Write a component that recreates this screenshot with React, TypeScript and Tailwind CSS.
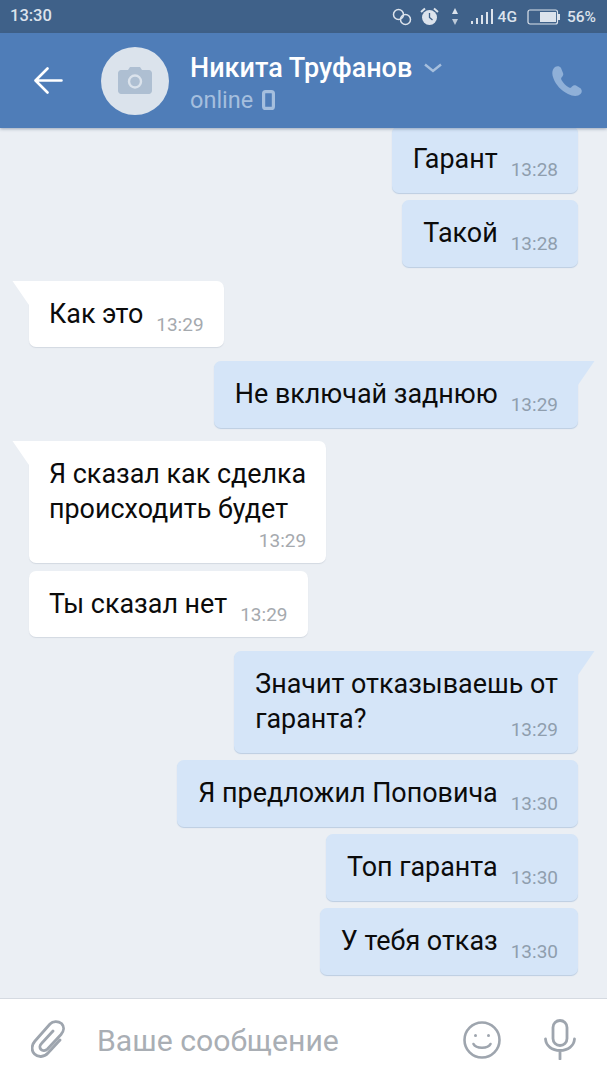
const font = { fontFamily: 'Roboto, "Noto Sans", sans-serif' };

type Msg = { lines: string[]; time: string; out?: boolean; tail?: boolean; timeBelow?: boolean; short?: boolean; gap: string };

const messages: Msg[] = [
  { lines: ['Гарант'], time: '13:28', out: true, gap: 'mt-0' },
  { lines: ['Такой'], time: '13:28', out: true, gap: 'mt-[7px]' },
  { lines: ['Как это'], time: '13:29', tail: true, short: true, gap: 'mt-[14px]' },
  { lines: ['Не включай заднюю'], time: '13:29', out: true, tail: true, gap: 'mt-[14px]' },
  { lines: ['Я сказал как сделка', 'происходить будет'], time: '13:29', tail: true, timeBelow: true, gap: 'mt-[13px]' },
  { lines: ['Ты сказал нет'], time: '13:29', short: true, gap: 'mt-[8px]' },
  { lines: ['Значит отказываешь от', 'гаранта?'], time: '13:29', out: true, tail: true, gap: 'mt-[14px]' },
  { lines: ['Я предложил Поповича'], time: '13:30', out: true, gap: 'mt-[7px]' },
  { lines: ['Топ гаранта'], time: '13:30', out: true, gap: 'mt-[7px]' },
  { lines: ['У тебя отказ'], time: '13:30', out: true, gap: 'mt-[7px]' },
];

function Bubble({ m }: { m: Msg }) {
  const last = m.lines.length - 1;
  const time = <span className={`text-[19px] leading-[20px] -mb-[3px] ${m.out ? 'text-[#8f9eae]' : 'text-[#a5a9ae]'}`}>{m.time}</span>;
  return (
    <div className={`relative pr-[20px] pt-[16px] rounded-[7px] ${m.short || m.timeBelow ? 'pb-[15px]' : 'pb-[16px]'} ${m.gap} ${m.out ? 'pl-[21px] self-end mr-[29px] bg-[#d5e5f8] shadow-[0_1px_1px_#bccde2]' : 'pl-[20px] self-start ml-[29px] bg-white shadow-[0_1px_1px_#d3d9e1]'} ${m.tail ? (m.out ? 'rounded-tr-none' : 'rounded-tl-none') : ''}`}>
      {m.tail && m.out && (
        <svg className="absolute top-0 -right-[17px]" width="18" height="30" viewBox="0 0 18 30">
          <path d="M0 0H17.5L1 24C0.4 25 0 26 0 28Z" fill="#d5e5f8" />
        </svg>
      )}
      {m.tail && !m.out && (
        <svg className="absolute top-0 -left-[17px]" width="18" height="30" viewBox="0 0 18 30">
          <path d="M18 0H0.5L17 24C17.6 25 18 26 18 28Z" fill="#ffffff" />
        </svg>
      )}
      {m.lines.map((line, i) => (
        <div key={i} className="flex items-end justify-between gap-[13px] text-[26.9px] leading-[35px] text-[#0b0b0b]">
          <span className="whitespace-nowrap">{line}</span>
          {i === last && !m.timeBelow && time}
        </div>
      ))}
      {m.timeBelow && <div className="flex justify-end mt-[4px]">{time}</div>}
    </div>
  );
}

function StatusIcons() {
  return (
    <div className="flex items-center text-[#dce3ec]">
      <svg width="20" height="18" viewBox="0 0 20 18" fill="none" stroke="currentColor" strokeWidth="1.5">
        <circle cx="6.5" cy="6.5" r="5" />
        <circle cx="13.5" cy="11.5" r="5" />
      </svg>
      <svg className="ml-[8px]" width="19" height="19" viewBox="0 0 19 19">
        <circle cx="9.5" cy="10.5" r="7.5" fill="currentColor" />
        <path d="M1 5L5 1.5M18 5L14 1.5" stroke="currentColor" strokeWidth="2" />
        <path d="M9.5 6V10.5L12.5 13" stroke="#3f6189" strokeWidth="1.3" fill="none" />
      </svg>
      <svg className="ml-[13px]" width="6" height="17" viewBox="0 0 6 17" fill="currentColor">
        <path d="M3 0L6 6H0Z" />
        <path d="M3 17L0 11H6Z" opacity="0.8" />
      </svg>
      <svg className="ml-[13px]" width="22" height="16" viewBox="0 0 22 16" fill="currentColor">
        <rect x="0" y="12" width="2" height="3" />
        <rect x="5" y="9" width="2" height="6" />
        <rect x="10" y="6" width="2" height="9" />
        <rect x="15" y="3" width="2" height="12" />
        <rect x="20" y="0" width="2" height="15" />
      </svg>
      <span className="ml-[5px] text-[15.5px] font-medium leading-[18px]">4G</span>
      <svg className="ml-[10px]" width="33" height="16" viewBox="0 0 33 16" fill="none">
        <rect x="1" y="1" width="29.5" height="14" rx="2" stroke="currentColor" strokeWidth="1.2" />
        <rect x="13" y="3" width="16" height="10" fill="currentColor" />
        <rect x="31" y="5" width="2" height="6" fill="currentColor" />
      </svg>
      <span className="ml-[7px] text-[15.5px] font-medium leading-[18px]">56%</span>
    </div>
  );
}

export default function App() {
  return (
    <div className="w-[607px] h-[1080px] flex flex-col overflow-hidden bg-[#ebeff4]" style={font}>
      {/* status bar */}
      <div className="h-[33px] shrink-0 flex items-center justify-between pl-[10px] pr-[11px] bg-[#3f6189]">
        <span className="text-[16.5px] font-medium text-[#dce3ec]">13:30</span>
        <StatusIcons />
      </div>

      {/* header */}
      <div className="relative z-10 h-[95px] shrink-0 flex items-center pl-[34px] pr-[25px] bg-[#4f7db8] shadow-[0_1px_3px_rgba(60,80,110,0.45)]">
        <svg width="29" height="27" viewBox="0 0 29 27" fill="none" stroke="#ffffff" strokeWidth="2.6" strokeLinecap="round" strokeLinejoin="round">
          <path d="M27.5 13.5H2M13.5 1.5L1.5 13.5L13.5 25.5" />
        </svg>
        <div className="ml-[38px] w-[68px] h-[68px] rounded-full bg-[#dbe3ec] flex items-center justify-center">
          <svg width="34" height="27" viewBox="0 0 34 27">
            <path d="M3 3H10L12 0H22L24 3H31C32.5 3 34 4.5 34 6V24C34 25.500 32.500 27 31 27H3C1.500 27 0 25.500 0 24V6C0 4.500 1.500 3 3 3Z" fill="#aebfd2" />
            <circle cx="17" cy="14.500" r="6" fill="none" stroke="#dbe3ec" strokeWidth="2.4" />
          </svg>
        </div>
        <div className="ml-[21px] flex-1 flex flex-col mt-[5px]">
          <div className="flex items-center h-[34px]">
            <span className="text-[27px] font-medium text-white leading-[34px]">Никита Труфанов</span>
            <svg className="ml-[12px]" width="18" height="10" viewBox="0 0 18 10" fill="none" stroke="#a6bfdd" strokeWidth="2.400">
              <path d="M1 1.500L9 8L17 1.500" />
            </svg>
          </div>
          <div className="flex items-center h-[30px]">
            <span className="text-[23.5px] leading-[30px] text-[#a5bfde]">online</span>
            <svg className="ml-[9px]" width="13" height="20" viewBox="0 0 13 20" fill="none" stroke="#a5bfde" strokeWidth="3.200">
              <rect x="1.600" y="1.600" width="9.800" height="16.800" rx="2" />
            </svg>
          </div>
        </div>
        <svg width="30" height="30" viewBox="0 0 30 30" fill="#8fb0d8">
          <path d="M3 1C5 -0.500 8 0 9 2L11 7C11.700 8.700 11 10 9.500 11.500C9 12 9 13 9.500 14C11.500 17.500 13.500 19.500 17 21.500C18 22 19 22 19.500 21C21 19.300 22.500 18.700 24 19.500L28 22C30 23.300 30.500 26 28.500 28C26 30.500 21 30.500 16 28C9 24.500 4 19 1.500 12.500C-0.500 8 0 3.500 3 1Z" />
        </svg>
      </div>

      {/* messages */}
      <div className="flex-1 min-h-0 overflow-hidden flex flex-col justify-end pb-[23px] text-[#0b0b0b]">
        {messages.map((m, i) => (
          <Bubble key={i} m={m} />
        ))}
      </div>

      {/* input */}
      <div className="h-[82px] shrink-0 flex items-center bg-white border-t border-[#d5dae1] pl-[31px] pr-[31px]">
        <svg width="34" height="39" viewBox="0 0 34 39" fill="none" stroke="#9ea5ae" strokeWidth="2.800" strokeLinecap="round">
          <path d="M29 20L17 33C13 37.500 7 37.500 3.500 34C0 30.500 0.500 25 4 21L19 4C22 1 27 0.800 30.500 3.500C33.500 6.500 33 11 30 14.500L16.500 29C14.500 31 11.500 31 10 29.500C8.500 28 8.500 25.500 10.500 23.500L22 11" />
        </svg>
        <span className="ml-[32px] mt-[2px] flex-1 text-[30.2px] text-[#a9aeb4] leading-[36px]">Ваше сообщение</span>
        <svg width="38" height="38" viewBox="0 0 38 38" fill="none" stroke="#9ea5ae" strokeWidth="2.600" strokeLinecap="round">
          <circle cx="19" cy="19" r="17.500" />
          <path d="M10.500 23C13 28 25 28 27.500 23" />
          <circle cx="12.500" cy="14.500" r="1.500" fill="#9ea5ae" stroke="none" />
          <circle cx="25.500" cy="14.500" r="1.500" fill="#9ea5ae" stroke="none" />
        </svg>
        <svg className="ml-[43px]" width="32" height="41" viewBox="0 0 32 41" fill="none" stroke="#9ea5ae" strokeWidth="2.800" strokeLinecap="round">
          <rect x="9" y="1.500" width="14" height="25" rx="7" />
          <path d="M1.500 20C2 27 8 31.500 16 31.500C24 31.500 30 27 30.500 20M16 31.500V40" />
        </svg>
      </div>
    </div>
  );
}
